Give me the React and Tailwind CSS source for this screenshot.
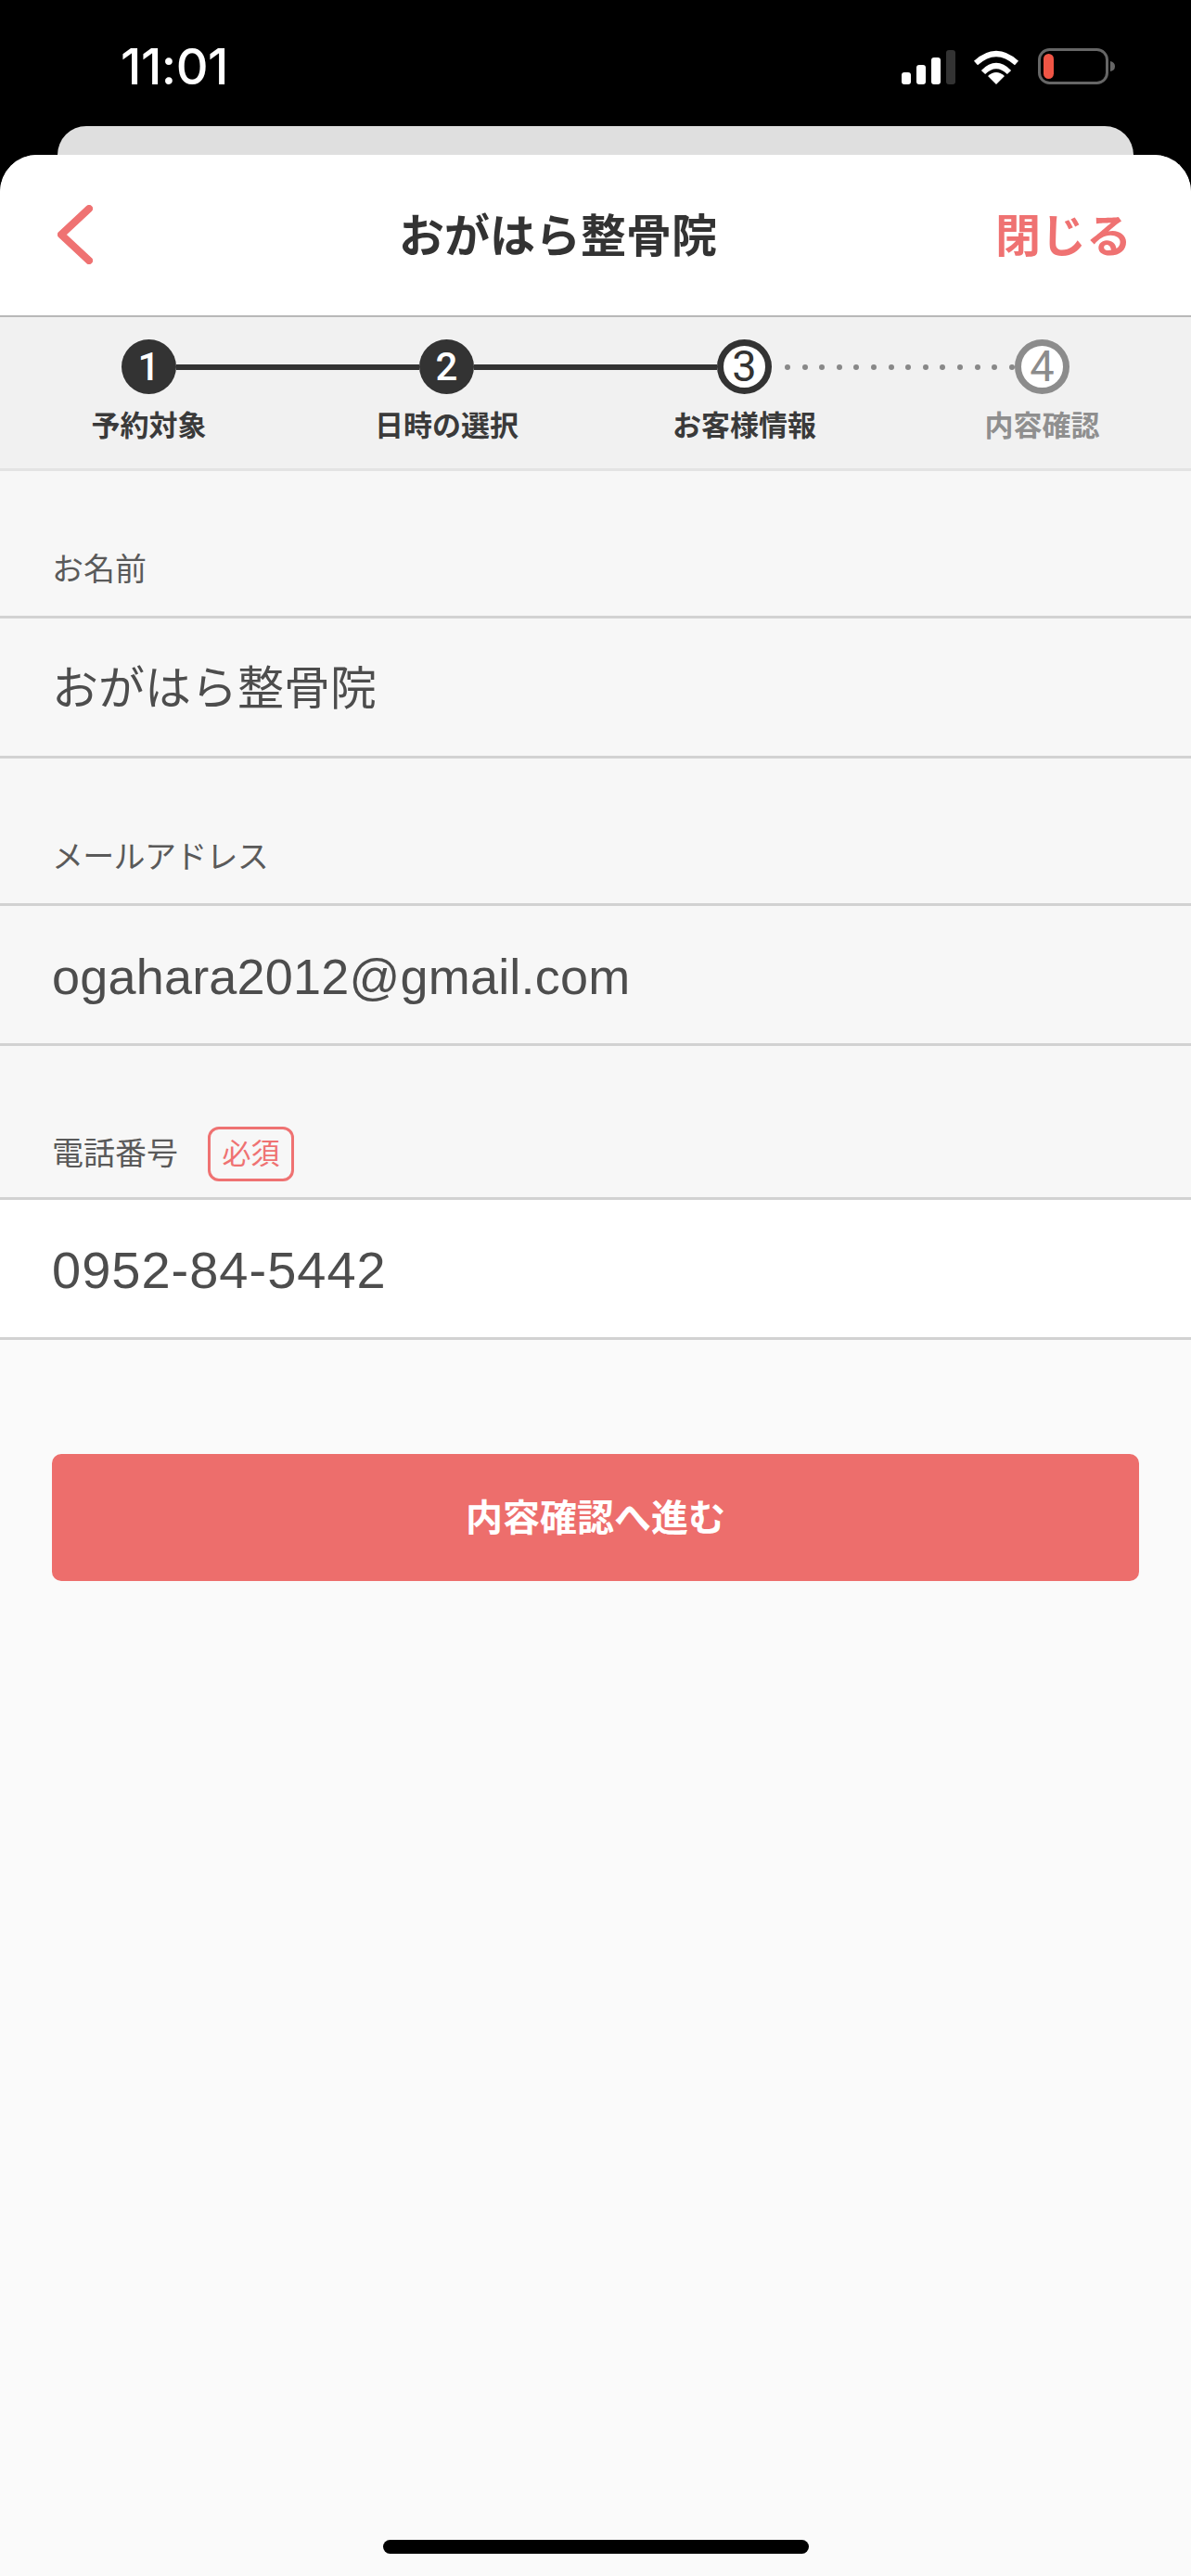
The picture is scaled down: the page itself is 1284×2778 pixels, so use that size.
import React from 'react';

const JP = "font-['Liberation_Sans','Noto_Sans_CJK_JP',sans-serif]";

const SignalIcon = () => (
  <svg width="58" height="37" viewBox="0 0 58 37">
    <rect x="0" y="24" width="10" height="13" rx="3" fill="#fff" />
    <rect x="16" y="16" width="10" height="21" rx="3" fill="#fff" />
    <rect x="32" y="8" width="10" height="29" rx="3" fill="#fff" />
    <rect x="48" y="0" width="10" height="37" rx="3" fill="#333" />
  </svg>
);

const WifiIcon = () => (
  <svg width="50" height="37" viewBox="0 0 50 37">
    <path d="M3 14 Q25 -6 47 14" fill="none" stroke="#fff" strokeWidth="6" />
    <path d="M11 24 Q25 10 39 24" fill="none" stroke="#fff" strokeWidth="6" />
    <path d="M25 37 L16 28 Q25 20 34 28 Z" fill="#fff" />
  </svg>
);

const BatteryIcon = () => (
  <svg width="83" height="39" viewBox="0 0 83 39">
    <rect x="1.5" y="1.5" width="73" height="36" rx="11" fill="none" stroke="#666" strokeWidth="3" />
    <rect x="6" y="6" width="11" height="27" rx="5.5" fill="#f05545" />
    <path d="M78 14 Q83 15 83 19.5 Q83 24 78 25 Z" fill="#666" />
  </svg>
);

const Field = ({ label, value, required, white }) => (
  <div>
    <div className={`flex items-center ${required ? 'h-[163px] pt-[69px]' : 'h-[156px] pt-[56px]'} pl-[56px] text-[34px] leading-none text-[#5a5a5a]`}>
      {label}
      {required && (
        <span className="ml-[32px] flex h-[59px] w-[93px] items-center justify-center rounded-[12px] border-[3px] border-[#ef7272] text-[31px] text-[#ef7272]">
          必須
        </span>
      )}
    </div>
    <div className={`flex h-[154px] items-center border-y-[3px] border-[#d2d2d2] pt-[4px] pl-[56px] text-[#4d4d4d] ${white ? 'bg-white' : ''}`}>
      {value}
    </div>
  </div>
);

const steps = ['予約対象', '日時の選択', 'お客様情報', '内容確認'];
const dots = Array.from({ length: 14 }, (_, i) => i);

export default function App() {
  return (
    <div className={`min-h-[2778px] bg-black ${JP}`}>
      {/* status bar */}
      <div className="flex h-[136px] items-start pt-[42px] pl-[130px] pr-[82px] text-white">
        <span className="font-['Inter',sans-serif] text-[54px] leading-[60px] font-medium tracking-[-0.5px]">11:01</span>
        <div className="ml-auto mt-[10px] flex items-end">
          <SignalIcon />
          <div className="ml-[19px]"><WifiIcon /></div>
          <div className="ml-[20px]"><BatteryIcon /></div>
        </div>
      </div>
      <div className="mx-[62px] h-[31px] rounded-t-[32px] bg-[#dfdfdf]" />

      {/* sheet */}
      <div className="flex min-h-[2611px] flex-col overflow-hidden rounded-t-[40px] bg-[#fafafa]">
        <div className="flex h-[175px] items-center border-b-2 border-[#b8b8b8] bg-white pt-[3px] pl-[62px] pr-[64px]">
          <svg width="38" height="64" viewBox="0 0 38 64" className="shrink-0 -translate-y-[2px]">
            <path d="M34 4 L4 32 L34 60" fill="none" stroke="#ef7272" strokeWidth="8" strokeLinecap="round" strokeLinejoin="round" />
          </svg>
          <h1 className="ml-[330px] text-[49px] leading-none font-bold text-[#333]">おがはら整骨院</h1>
          <button className="ml-auto text-[49px] leading-none font-bold text-[#ef7272]">閉じる</button>
        </div>

        {/* stepper */}
        <div className="h-[166px] border-b-[3px] border-[#e3e3e3] bg-[#f1f1f1] pt-[24px]">
          <div className="flex items-center px-[131px] font-['Roboto',sans-serif] text-[42px] font-medium">
            <span className="flex h-[59px] w-[59px] items-center justify-center rounded-full bg-[#333] text-white">1</span>
            <span className="h-[6px] flex-1 bg-[#333]" />
            <span className="flex h-[59px] w-[59px] items-center justify-center rounded-full bg-[#333] text-white">2</span>
            <span className="h-[6px] flex-1 bg-[#333]" />
            <span className="flex h-[59px] w-[59px] items-center justify-center rounded-full border-[7px] border-[#333] bg-white text-[47px] font-normal text-[#333]">3</span>
            <div className="flex-1">
              <div className="ml-[14px] flex justify-between">
                {dots.map((d) => (
                  <span key={d} className="h-[6px] w-[6px] rounded-full bg-[#888]" />
                ))}
              </div>
            </div>
            <span className="flex h-[59px] w-[59px] items-center justify-center rounded-full border-[7px] border-[#8c8c8c] bg-white text-[47px] font-normal text-[#8c8c8c]">4</span>
          </div>
          <div className="mt-[19px] grid grid-cols-4 text-center text-[31px] leading-[31px] font-bold">
            {steps.map((s, i) => (
              <span key={s} className={i === 3 ? 'text-[#8f8f8f]' : 'text-[#3a3a3a]'}>{s}</span>
            ))}
          </div>
        </div>

        {/* form */}
        <div className="bg-[#f7f7f7]">
          <Field label={<span>お名前</span>} value={<span className="text-[50px] leading-none">おがはら整骨院</span>} />
          <Field label={<span className="tracking-[-0.7px]">メールアドレス</span>} value={<span className="text-[54px] leading-none tracking-[0.2px]">ogahara2012@gmail.com</span>} />
          <Field label={<span>電話番号</span>} required white value={<span className="text-[56px] leading-none tracking-[1px]">0952-84-5442</span>} />
        </div>

        <button className="mx-[56px] mt-[123px] h-[137px] rounded-[10px] bg-[#ed6e6c] text-[40px] font-bold text-white">
          内容確認へ進む
        </button>

        <div className="mt-auto mb-[24px] h-[15px] w-[459px] self-center rounded-full bg-black" />
      </div>
    </div>
  );
}
